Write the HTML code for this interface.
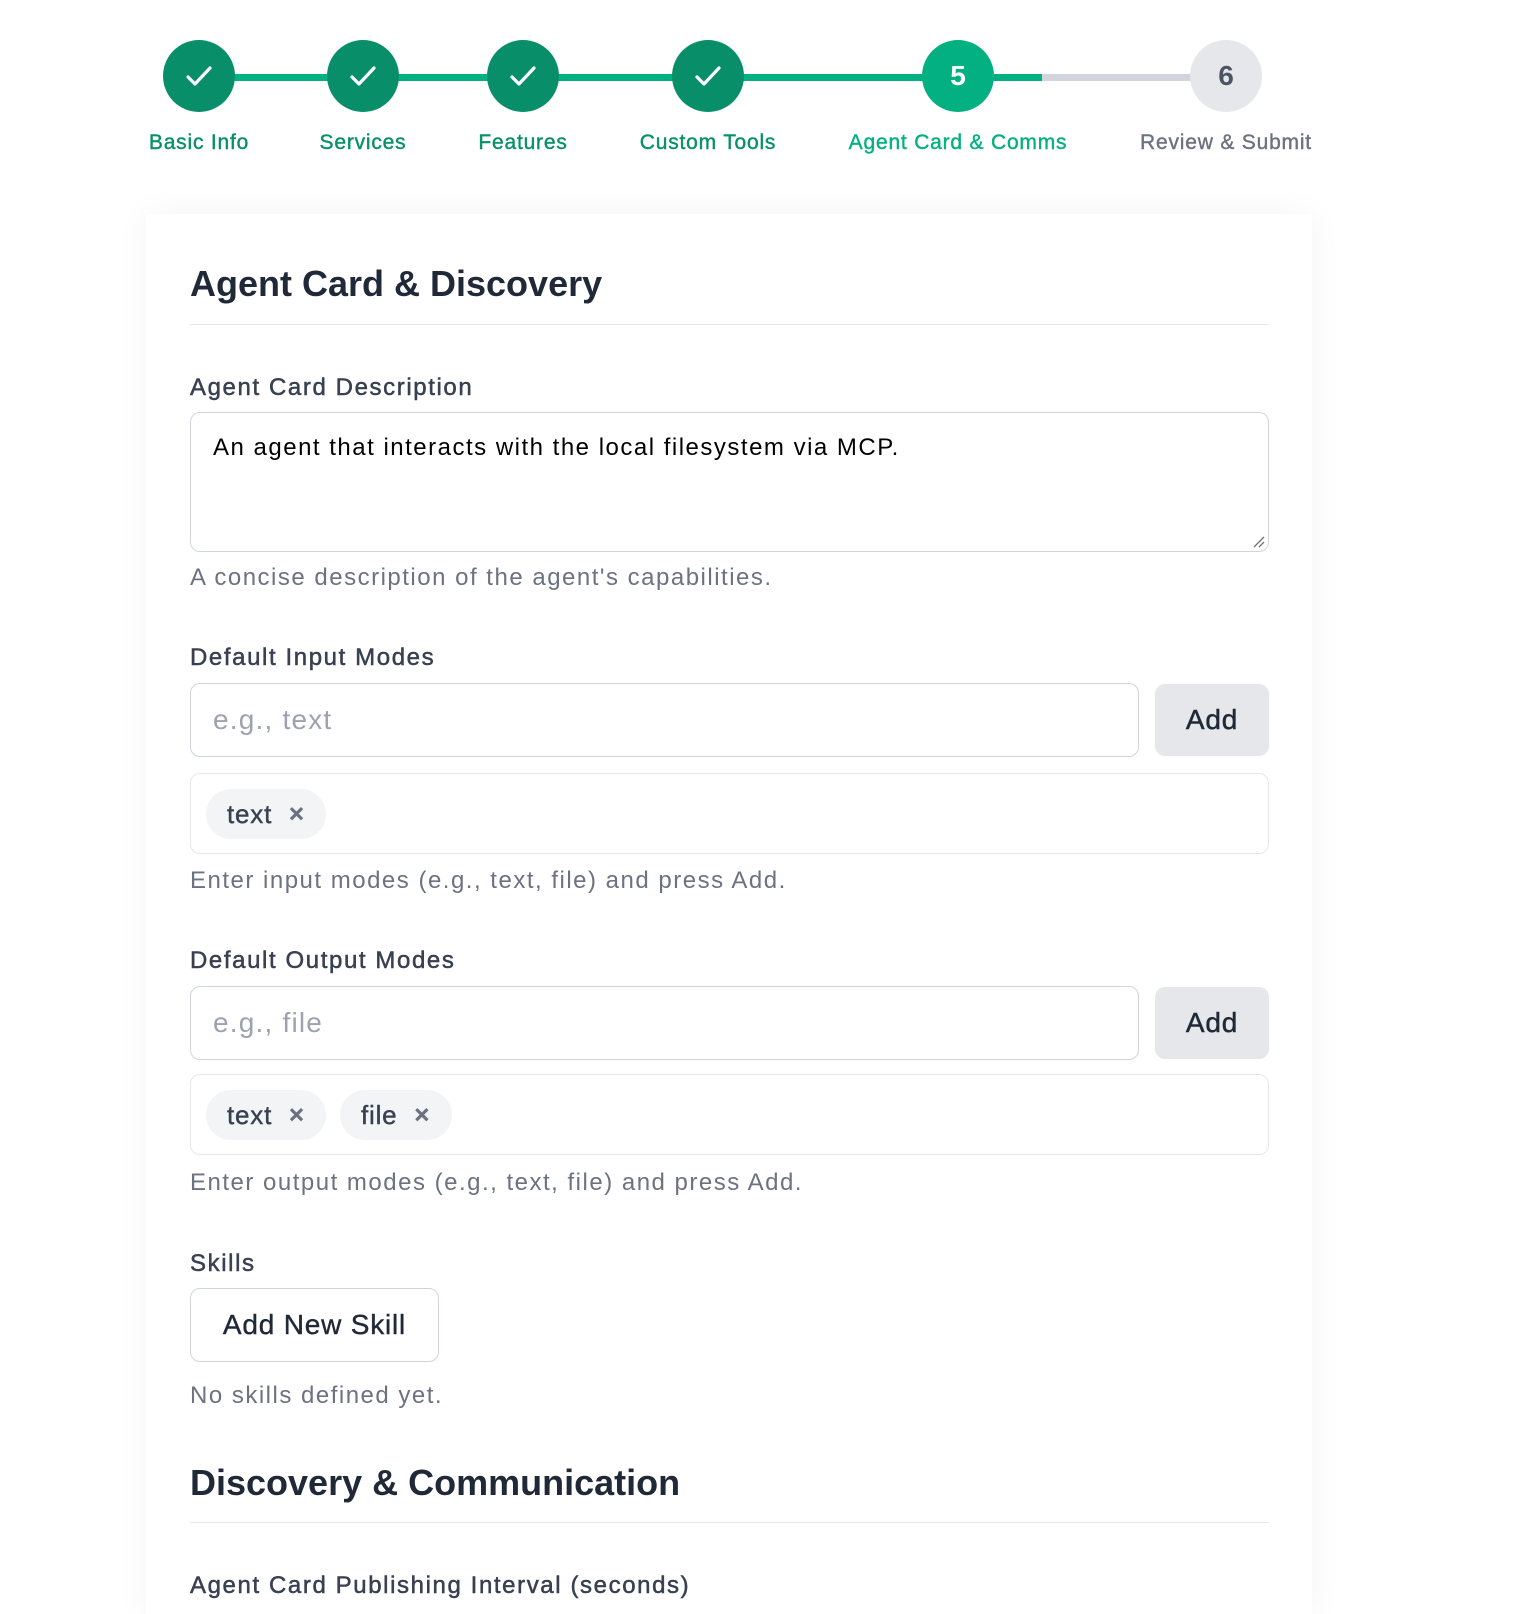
<!DOCTYPE html>
<html><head><meta charset="utf-8"><style>
*{box-sizing:border-box;margin:0;padding:0}
body{width:1530px;height:1594px;background:#fff;font-family:"Liberation Sans",Arial,sans-serif;position:relative;overflow:hidden}
.a{position:absolute}
.circ{position:absolute;width:72px;height:72px;border-radius:50%;top:40px;display:flex;align-items:center;justify-content:center;font-weight:bold;font-size:28px}
.done{background:#088f6a}
.cur{background:#03b081;color:#fff}
.todo{background:#e5e7eb;color:#4b5563}
.lbl{position:absolute;top:131px;font-size:21px;transform:translateX(-50%);white-space:nowrap;color:#089068;letter-spacing:0.8px;-webkit-text-stroke:0.4px currentColor}
.card{position:absolute;left:146px;top:214px;width:1166px;height:1400px;background:#fff;box-shadow:0 0 30px rgba(0,0,0,0.05)}
.h{position:absolute;left:190px;font-size:36px;font-weight:bold;color:#1f2937}
.hr{position:absolute;left:190px;width:1079px;height:1px;background:#e5e7eb}
.l{position:absolute;left:190px;font-size:24px;color:#374151;letter-spacing:1.6px;-webkit-text-stroke:0.5px currentColor}
.hint{position:absolute;left:190px;font-size:24px;color:#6b7280;letter-spacing:1.5px}
.inp{position:absolute;left:190px;width:949px;height:74px;border:1px solid #d1d5db;border-radius:10px;font-size:28px;color:#9ca3af;padding:0 22px;display:flex;align-items:center;letter-spacing:1.2px}
.add{position:absolute;left:1155px;width:114px;height:72px;background:#e5e7eb;border-radius:10px;font-size:28px;color:#1f2937;display:flex;align-items:center;justify-content:center;-webkit-text-stroke:0.5px currentColor;letter-spacing:0.8px}
.box{position:absolute;left:190px;width:1079px;height:81px;border:1px solid #e5e7eb;border-radius:10px}
.chip{position:absolute;top:15px;height:50px;border-radius:25px;background:#f3f4f6;font-size:26px;color:#374151;display:flex;align-items:center;padding-left:21px;letter-spacing:0.8px;-webkit-text-stroke:0.4px currentColor}
.chip span{font-size:20px;color:#6b7280;margin-left:16px;font-weight:bold}
</style></head><body>
<div class="a" style="left:199px;top:74px;width:843px;height:7px;background:#03b081"></div>
<div class="a" style="left:1042px;top:74px;width:184px;height:7px;background:#d1d5db"></div>
<div class="circ done" style="left:163px"><svg width="32" height="32" viewBox="0 0 32 32"><path d="M5 17l7 7L27 8" stroke="#fff" stroke-width="3.2" fill="none" stroke-linecap="round" stroke-linejoin="round"/></svg></div>
<div class="circ done" style="left:327px"><svg width="32" height="32" viewBox="0 0 32 32"><path d="M5 17l7 7L27 8" stroke="#fff" stroke-width="3.2" fill="none" stroke-linecap="round" stroke-linejoin="round"/></svg></div>
<div class="circ done" style="left:487px"><svg width="32" height="32" viewBox="0 0 32 32"><path d="M5 17l7 7L27 8" stroke="#fff" stroke-width="3.2" fill="none" stroke-linecap="round" stroke-linejoin="round"/></svg></div>
<div class="circ done" style="left:672px"><svg width="32" height="32" viewBox="0 0 32 32"><path d="M5 17l7 7L27 8" stroke="#fff" stroke-width="3.2" fill="none" stroke-linecap="round" stroke-linejoin="round"/></svg></div>
<div class="circ cur" style="left:922px">5</div>
<div class="circ todo" style="left:1190px">6</div>
<div class="lbl" style="left:199px">Basic Info</div>
<div class="lbl" style="left:363px">Services</div>
<div class="lbl" style="left:523px">Features</div>
<div class="lbl" style="left:708px">Custom Tools</div>
<div class="lbl" style="left:958px;color:#03b081">Agent Card &amp; Comms</div>
<div class="lbl" style="left:1226px;color:#6b7280">Review &amp; Submit</div>
<div class="card"></div>
<div class="h" style="top:263px">Agent Card &amp; Discovery</div>
<div class="hr" style="top:324px"></div>
<div class="l" style="top:374px">Agent Card Description</div>
<div class="a" style="left:190px;top:412px;width:1079px;height:140px;border:1px solid #d1d5db;border-radius:10px;font-size:24px;color:#000;padding:21px 22px;letter-spacing:1.5px">An agent that interacts with the local filesystem via MCP.
<svg class="a" style="right:3px;bottom:3px" width="14" height="14"><path d="M3 13L13 3M8 13L13 8" stroke="#6b7280" stroke-width="1.3"/></svg></div>
<div class="hint" style="top:564px">A concise description of the agent's capabilities.</div>
<div class="l" style="top:644px">Default Input Modes</div>
<div class="inp" style="top:683px">e.g., text</div>
<div class="add" style="top:684px">Add</div>
<div class="box" style="top:773px"><div class="chip" style="left:15px;width:120px">text<span>✕</span></div></div>
<div class="hint" style="top:867px">Enter input modes (e.g., text, file) and press Add.</div>
<div class="l" style="top:947px">Default Output Modes</div>
<div class="inp" style="top:986px">e.g., file</div>
<div class="add" style="top:987px">Add</div>
<div class="box" style="top:1074px"><div class="chip" style="left:15px;width:120px">text<span>✕</span></div><div class="chip" style="left:149px;width:112px">file<span>✕</span></div></div>
<div class="hint" style="top:1169px">Enter output modes (e.g., text, file) and press Add.</div>
<div class="l" style="top:1250px">Skills</div>
<div class="a" style="left:190px;top:1288px;width:249px;height:74px;border:1px solid #d1d5db;border-radius:10px;font-size:28px;color:#1f2937;display:flex;align-items:center;justify-content:center;letter-spacing:0.8px;-webkit-text-stroke:0.4px #1f2937">Add New Skill</div>
<div class="hint" style="top:1382px">No skills defined yet.</div>
<div class="h" style="top:1462px">Discovery &amp; Communication</div>
<div class="hr" style="top:1522px"></div>
<div class="l" style="top:1572px">Agent Card Publishing Interval (seconds)</div>
</body></html>
